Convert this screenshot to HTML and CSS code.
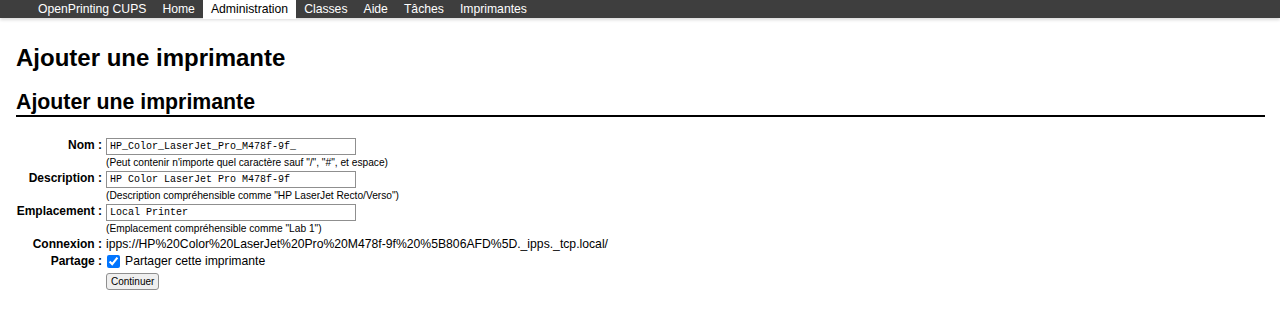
FILE: index.html
```html
<!DOCTYPE html>
<html lang="fr">
<head>
    <meta charset="utf-8" />
    <title>Ajouter une imprimante - CUPS</title>
    <link rel="stylesheet" href="styles.css">
</head>
<body>

    <!-- Top navigation -->
    <nav class="header">
        <a class="nav-link" href="#">OpenPrinting CUPS</a>
        <a class="nav-link" href="#">Home</a>
        <a class="nav-link active" href="#">Administration</a>
        <a class="nav-link" href="#">Classes</a>
        <a class="nav-link" href="#">Aide</a>
        <a class="nav-link" href="#">Tâches</a>
        <a class="nav-link" href="#">Imprimantes</a>
    </nav>

    <div class="body">
        <h1 class="title">Ajouter une imprimante</h1>
        <h2 class="title">Ajouter une imprimante</h2>

        <form class="add-form">
            <table class="form-table">
                <tr>
                    <th class="label">Nom&nbsp;:</th>
                    <td>
                        <input class="field" type="text" value="HP_Color_LaserJet_Pro_M478f-9f_">
                        <div class="hint">(Peut contenir n'importe quel caractère sauf "/", "#", et espace)</div>
                    </td>
                </tr>
                <tr>
                    <th class="label">Description&nbsp;:</th>
                    <td>
                        <input class="field" type="text" value="HP Color LaserJet Pro M478f-9f">
                        <div class="hint">(Description compréhensible comme "HP LaserJet Recto/Verso")</div>
                    </td>
                </tr>
                <tr>
                    <th class="label">Emplacement&nbsp;:</th>
                    <td>
                        <input class="field" type="text" value="Local Printer">
                        <div class="hint">(Emplacement compréhensible comme "Lab 1")</div>
                    </td>
                </tr>
                <tr>
                    <th class="label">Connexion&nbsp;:</th>
                    <td class="value">ipps://HP%20Color%20LaserJet%20Pro%20M478f-9f%20%5B806AFD%5D._ipps._tcp.local/</td>
                </tr>
                <tr>
                    <th class="label">Partage&nbsp;:</th>
                    <td class="value">
                        <label class="check"><input type="checkbox" checked> Partager cette imprimante</label>
                    </td>
                </tr>
                <tr>
                    <th></th>
                    <td><button class="btn" type="button">Continuer</button></td>
                </tr>
            </table>
        </form>
    </div>

</body>
</html>
```

FILE: styles.css
```css
/* Base page */
body {
    margin: 0;
    font-family: "Liberation Sans", Arial, sans-serif;
    color: #000;
    background: #fff;
}

/* Dark header bar */
.header {
    display: flex;
    height: 18px;
    padding-left: 30px;
    background: #3e3e3e;
    box-shadow: 0 2px 3px rgba(0, 0, 0, 0.15);
}

.nav-link {
    padding: 0 8px;
    font-size: 12.2px;
    line-height: 18px;
    color: #fff;
    text-decoration: none;
}

.nav-link.active {
    height: 19px;
    background: #fff;
    color: #000;
}

/* Main content */
.body {
    padding: 0 15px 0 16px;
}

h1.title {
    margin: 26px 0 0 0;
    font-size: 24px;
    line-height: 28px;
}

h2.title {
    margin: 18px 0 0 0;
    font-size: 21.3px;
    line-height: 25px;
    border-bottom: 2px solid #000;
}

/* Form */
.add-form {
    margin-top: 20px;
}

.form-table {
    border-collapse: collapse;
}

.form-table th,
.form-table td {
    padding: 0;
    vertical-align: top;
}

.label {
    width: 86px;
    padding-right: 3px !important;
    text-align: right;
    font-size: 12px;
    line-height: 17px;
    white-space: nowrap;
}

.field {
    box-sizing: border-box;
    width: 250px;
    height: 17px;
    margin: 1px 0 0 1px;
    padding: 0 3px;
    border: 1px solid #8f8f8f;
    font-family: "Liberation Mono", "Courier New", monospace;
    font-size: 10px;
    display: block;
}

.hint {
    padding-left: 1px;
    font-size: 10.2px;
    line-height: 15px;
    height: 15px;
}

.value {
    padding-left: 1px !important;
    font-size: 12.2px;
    line-height: 17px;
}

.check {
    display: flex;
    align-items: center;
    gap: 5px;
}

.check input {
    margin: 0 0 0 1px;
    width: 13px;
    height: 13px;
}

.btn {
    margin: 3px 0 0 1px;
    height: 17px;
    padding: 0 4px;
    font-family: "Liberation Sans", Arial, sans-serif;
    font-size: 10px;
    border: 1px solid #8f8f8f;
    border-radius: 3px;
    background: #efefef;
}
```
